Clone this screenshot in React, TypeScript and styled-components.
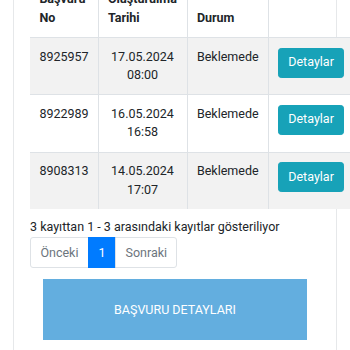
import React from "react";
import styled, { createGlobalStyle } from "styled-components";

const Global = createGlobalStyle`
  html, body { margin: 0; padding: 0; background: #fff; }
  body { font-family: Roboto, "Liberation Sans", Arial, sans-serif; color: #212529; overflow: hidden; }
`;

const Page = styled.div`
  padding-left: 13px;
  width: 350px;
  height: 350px;
  box-sizing: border-box;
  overflow: hidden;
`;

const Card = styled.div`
  margin-top: -20px;
  width: 324px;
  box-sizing: border-box;
  border: 1px solid #e6e8ea;
  padding: 0 0 60px 16px;
  background: #fff;
`;

const Table = styled.table`
  width: 323px;
  table-layout: fixed;
  border-collapse: collapse;
  font-size: 12.5px;
  line-height: 18.7px;
  margin-bottom: 9.6px;
`;

const Th = styled.th<{ $w: number }>`
  box-sizing: border-box;
  width: ${(p) => p.$w}px;
  padding: 9.4px;
  text-align: left;
  vertical-align: bottom;
  font-weight: 700;
  border-bottom: 1.4px solid #dee2e6;
  border-left: 0.8px solid #dee2e6;
  &:first-child { border-left: none; }
`;

const Tr = styled.tr<{ $striped: boolean }>`
  background: ${(p) => (p.$striped ? "#f2f2f2" : "#fff")};
`;

const Td = styled.td<{ $center?: boolean }>`
  box-sizing: border-box;
  padding: 9.4px;
  vertical-align: top;
  text-align: ${(p) => (p.$center ? "center" : "left")};
  border-top: 0.8px solid #dee2e6;
  border-left: 0.8px solid #dee2e6;
  &:first-child { border-left: none; }
`;

const InfoButton = styled.button`
  display: inline-block;
  font-family: inherit;
  font-size: 12.5px;
  line-height: 18.7px;
  padding: 4.7px 9.4px;
  border: 0.8px solid #17a2b8;
  background: #17a2b8;
  color: #fff;
  border-radius: 3.2px;
  white-space: nowrap;
  margin-top: 0;
`;

const Info = styled.div`
  font-size: 12.5px;
  line-height: 18.7px;
  color: #212529;
`;

const Pagination = styled.ul`
  display: flex;
  list-style: none;
  margin: 0.4px 0 0;
  padding: 0;
`;

const PageLink = styled.li<{ $active?: boolean }>`
  font-size: 12.5px;
  line-height: 15.6px;
  padding: 6.25px 9.4px;
  border: 0.8px solid ${(p) => (p.$active ? "#007bff" : "#dee2e6")};
  background: ${(p) => (p.$active ? "#007bff" : "#fff")};
  color: ${(p) => (p.$active ? "#fff" : "#6c757d")};
  margin-left: -0.8px;
  &:first-child { margin-left: 0; border-radius: 3px 0 0 3px; }
  &:last-child { border-radius: 0 3px 3px 0; }
`;

const BigButton = styled.button`
  display: block;
  width: 264px;
  height: 61px;
  margin: 11.5px 0 0 13px;
  border: none;
  background: #63aedf;
  color: #fff;
  font-family: inherit;
  font-size: 12.5px;
  letter-spacing: 0;
  text-transform: uppercase;
`;

const rows = [
  { no: "8925957", date: "17.05.2024 08:00", status: "Beklemede" },
  { no: "8922989", date: "16.05.2024 16:58", status: "Beklemede" },
  { no: "8908313", date: "14.05.2024 17:07", status: "Beklemede" },
];

export default function App() {
  return (
    <Page>
      <Global />
      <Card>
        <Table>
          <thead>
            <tr>
              <Th $w={68}>Başvuru No</Th>
              <Th $w={89}>Oluşturulma Tarihi</Th>
              <Th $w={81}>Durum</Th>
              <Th $w={85}></Th>
            </tr>
          </thead>
          <tbody>
            {rows.map((r, i) => (
              <Tr key={r.no} $striped={i % 2 === 0}>
                <Td>{r.no}</Td>
                <Td $center>{r.date}</Td>
                <Td>{r.status}</Td>
                <Td>
                  <InfoButton>Detaylar</InfoButton>
                </Td>
              </Tr>
            ))}
          </tbody>
        </Table>
        <Info>3 kayıttan 1 - 3 arasındaki kayıtlar gösteriliyor</Info>
        <Pagination>
          <PageLink>Önceki</PageLink>
          <PageLink $active>1</PageLink>
          <PageLink>Sonraki</PageLink>
        </Pagination>
        <BigButton>Başvuru Detayları</BigButton>
      </Card>
    </Page>
  );
}
